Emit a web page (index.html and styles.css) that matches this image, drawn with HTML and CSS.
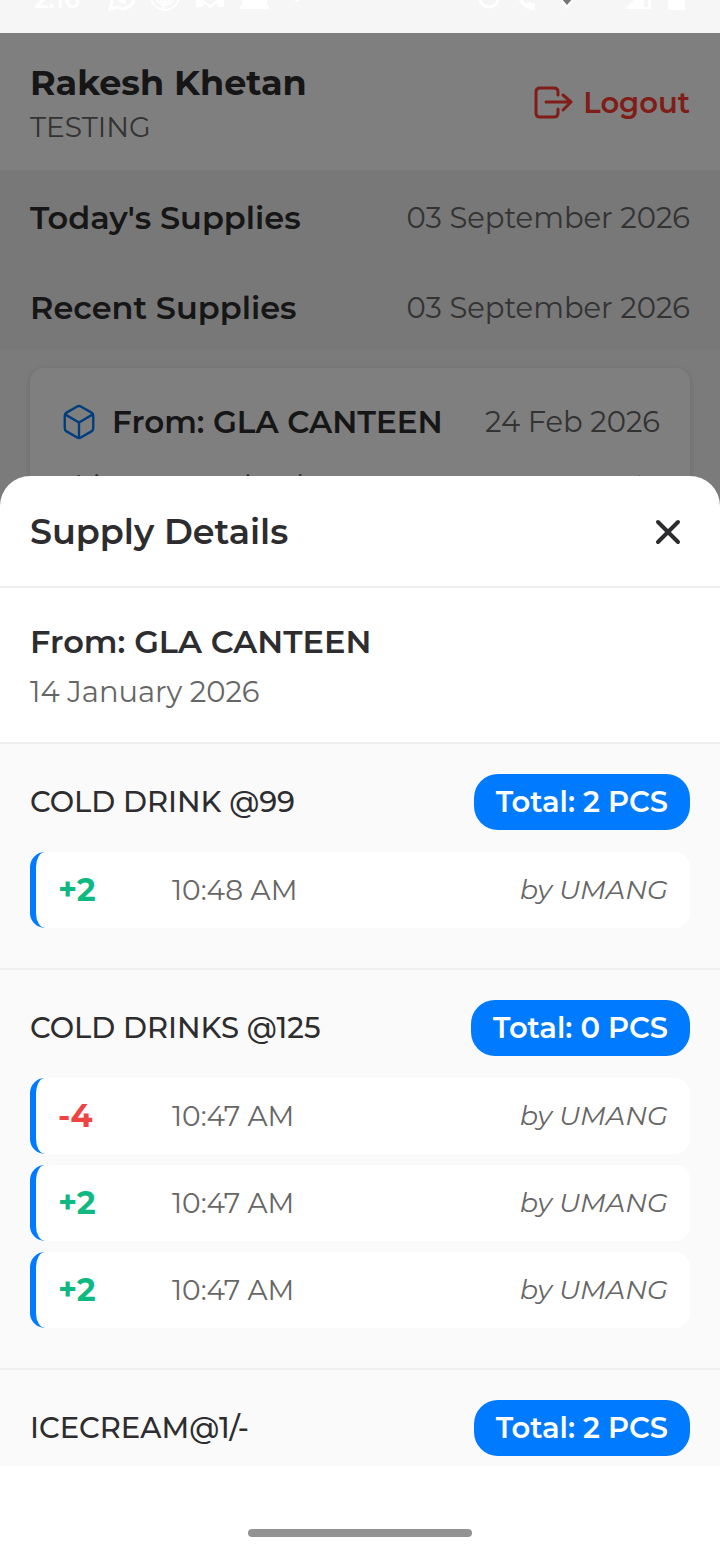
FILE: index.html
```html
<!doctype html>
<html lang="en">
  <head>
    <meta charset="UTF-8" />
    <meta name="viewport" content="width=device-width, initial-scale=1.0" />
    <title>Supply Details</title>
    <link rel="stylesheet" href="styles.css">
  </head>
  <body>
    <div class="status-bar">
      <div class="status-group">
        <span class="clock">2:16</span>
        <svg width="28" height="33" viewBox="0 0 28 33" fill="none" stroke="#fff" stroke-width="3">
          <path d="M3 9 L5 2 A12 12 0 1 1 10 7 Z" />
          <path d="M9 -3 Q12 4 19 4 L19 0 L14 -2" fill="#fff" stroke="none" />
        </svg>
        <svg width="30" height="33" viewBox="0 0 30 33" fill="none" stroke="#fff" stroke-width="2">
          <circle cx="15" cy="-4" r="14" />
          <circle cx="15" cy="-4" r="9" />
          <path d="M13 9 L16 -4 M10 0 Q15 6 20 0" />
        </svg>
        <svg width="30" height="33" viewBox="0 0 30 33" fill="#fff">
          <path d="M1 0 H8 V7 H1 Z M22 0 H29 V7 H22 Z M8 0 L15 5 L22 0 V3 L15 8 L8 3 Z" />
        </svg>
        <svg width="30" height="33" viewBox="0 0 30 33" fill="#fff">
          <path d="M1 0 H28 L26 4 L29 6 V9 H0 V6 L3 4 Z" />
        </svg>
        <svg width="26" height="33" viewBox="0 0 26 33" fill="#fff">
          <circle cx="12" cy="0" r="2" />
        </svg>
      </div>
      <div class="status-group">
        <svg width="22" height="33" viewBox="0 0 22 33" fill="none" stroke="#fff" stroke-width="3">
          <circle cx="11" cy="-2" r="9" />
        </svg>
        <svg width="24" height="33" viewBox="0 0 24 33" fill="#fff">
          <path d="M3 -2 Q7 10 20 10 V4 L14 2 L11 4 L8 0 Z" />
        </svg>
        <svg width="26" height="33" viewBox="0 0 26 33">
          <path d="M2 -4 L13 9 L24 -4 Z" fill="#fff" />
          <path d="M7 -2 L13 5 L19 -2 Z" fill="#777" />
        </svg>
        <svg class="signal" width="28" height="33" viewBox="0 0 28 33" fill="#fff">
          <path d="M0 9 L11 -2 H26 V9 Z" />
          <path d="M19 0 H23 V7 H19 Z" fill="#f6f6f6" />
        </svg>
        <svg width="18" height="33" viewBox="0 0 18 33" fill="#fff">
          <path d="M0 -4 H17 V10 H0 Z" />
        </svg>
      </div>
    </div>

    <div class="screen">
      <div class="app">
        <header class="header">
          <div>
            <h1>Rakesh Khetan</h1>
            <p class="role">TESTING</p>
          </div>
          <button type="button" class="btn-logout">
            <svg width="42" height="42" viewBox="0 0 42 42" fill="none" stroke="currentColor" stroke-width="3" stroke-linecap="round" stroke-linejoin="round">
              <path d="M25 13 V10 Q25 6 21 6 H7 Q3 6 3 10 V31 Q3 35 7 35 H21 Q25 35 25 31 V27" />
              <path d="M13 20 H38 M30 13 L38 20 L30 28" />
            </svg>
            Logout
          </button>
        </header>

        <section class="section-title">
          <h2>Today's Supplies</h2>
          <span class="muted">03 September 2026</span>
        </section>
        <section class="section-title">
          <h2>Recent Supplies</h2>
          <span class="muted">03 September 2026</span>
        </section>

        <div class="supply-card">
          <div class="supply-top">
            <svg width="38" height="38" viewBox="0 0 512 512" fill="none" stroke="#007aff" stroke-width="32" stroke-linecap="round" stroke-linejoin="round">
              <path d="M448 341V171a48 48 0 0 0-24-41L280 47a48 48 0 0 0-48 0L88 130a48 48 0 0 0-24 41v170a48 48 0 0 0 24 41l144 83a48 48 0 0 0 48 0l144-83a48 48 0 0 0 24-41z" />
              <path d="M69 153l187 110 187-110M256 463V263" />
            </svg>
            <h2>From: GLA CANTEEN</h2>
            <span class="muted">24 Feb 2026</span>
          </div>
          <div class="supply-bottom">
            <span class="muted">4 items received</span>
            <svg width="32" height="32" viewBox="0 0 512 512" fill="none" stroke="#666" stroke-width="48" stroke-linecap="round" stroke-linejoin="round">
              <path d="M184 112l144 144-144 144" />
            </svg>
          </div>
        </div>
      </div>

      <div class="backdrop"></div>

      <div class="sheet" role="dialog" aria-labelledby="sheet-title">
        <div class="sheet-header">
          <h2 id="sheet-title">Supply Details</h2>
          <button type="button" class="btn-close" aria-label="Close">
            <svg width="44" height="44" viewBox="0 0 44 44" fill="none" stroke="currentColor" stroke-width="4" stroke-linecap="round">
              <path d="M12 12 L32 32 M32 12 L12 32" />
            </svg>
          </button>
        </div>

        <div class="sheet-info">
          <h3>From: GLA CANTEEN</h3>
          <p class="muted">14 January 2026</p>
        </div>

        <div class="group">
          <div class="group-header">
            <h4>COLD DRINK @99</h4>
            <span class="badge">Total: 2 PCS</span>
          </div>
          <ul class="entries">
            <li class="entry">
              <span class="qty qty-plus">+2</span>
              <span class="time">10:48 AM</span>
              <span class="by">by UMANG</span>
            </li>
          </ul>
        </div>

        <div class="group">
          <div class="group-header">
            <h4>COLD DRINKS @125</h4>
            <span class="badge">Total: 0 PCS</span>
          </div>
          <ul class="entries">
            <li class="entry">
              <span class="qty qty-minus">-4</span>
              <span class="time">10:47 AM</span>
              <span class="by">by UMANG</span>
            </li>
            <li class="entry">
              <span class="qty qty-plus">+2</span>
              <span class="time">10:47 AM</span>
              <span class="by">by UMANG</span>
            </li>
            <li class="entry">
              <span class="qty qty-plus">+2</span>
              <span class="time">10:47 AM</span>
              <span class="by">by UMANG</span>
            </li>
          </ul>
        </div>

        <div class="group group-last">
          <div class="group-header">
            <h4>ICECREAM@1/-</h4>
            <span class="badge">Total: 2 PCS</span>
          </div>
        </div>

        <div class="nav-area">
          <div class="nav-handle"></div>
        </div>
      </div>
    </div>
  </body>
</html>
```

FILE: styles.css
```css
* {
  margin: 0;
  padding: 0;
  box-sizing: border-box;
}

body {
  font-family: Montserrat, Inter, sans-serif;
  font-size: 29px;
  line-height: 40px;
  color: #2d2d2f;
  background: #f6f6f6;
  min-height: 100vh;
  display: flex;
  flex-direction: column;
}

button {
  font: inherit;
  background: none;
  border: none;
  cursor: pointer;
}

svg {
  display: block;
  flex-shrink: 0;
}

.muted,
.role {
  color: #666;
}

/* status bar */
.status-bar {
  display: flex;
  justify-content: space-between;
  height: 33px;
  padding: 0 34px;
  overflow: hidden;
  background: #f6f6f6;
}

.status-group {
  display: flex;
  gap: 15px;
}

.clock {
  width: 58px;
  margin-top: -21px;
  font-size: 25px;
  font-weight: 600;
  color: #fff;
}

.signal {
  margin-left: 30px;
}

/* app */
.screen {
  position: relative;
  flex: 1;
  overflow: hidden;
}

.header {
  display: flex;
  justify-content: space-between;
  align-items: center;
  height: 137px;
  padding: 2px 30px 0;
  background: #fff;
}

.header h1 {
  font-size: 35px;
  line-height: 48px;
  font-weight: 700;
}

.role {
  font-size: 28px;
}

.btn-logout {
  display: flex;
  align-items: center;
  gap: 8px;
  font-weight: 600;
  color: #ff3b30;
}

.section-title {
  display: flex;
  justify-content: space-between;
  align-items: center;
  padding: 28px 30px 22px;
  background: #f0f0f0;
}

.section-title h2,
.sheet-info h3 {
  font-size: 32px;
  line-height: 40px;
  font-weight: 600;
}

.supply-card {
  margin: 18px 30px;
  padding: 34px 30px;
  background: #fff;
  border-radius: 14px;
  box-shadow: 0 1px 5px rgba(0, 0, 0, 0.15);
}

.supply-top {
  display: flex;
  align-items: center;
  gap: 14px;
}

.supply-top h2 {
  font-size: 31px;
  font-weight: 600;
}

.supply-top .muted {
  margin-left: auto;
}

.supply-bottom {
  display: flex;
  justify-content: space-between;
  align-items: center;
  margin-top: 24px;
  padding-left: 6px;
}

.backdrop {
  position: absolute;
  inset: 0;
  background: rgba(0, 0, 0, 0.5);
}

/* bottom sheet */
.sheet {
  position: absolute;
  left: 0;
  right: 0;
  bottom: 0;
  background: #fff;
  border-radius: 30px 30px 0 0;
}

.sheet-header {
  display: flex;
  justify-content: space-between;
  align-items: center;
  padding: 32px 30px 30px;
  border-bottom: 2px solid #eee;
}

.sheet-header h2 {
  font-size: 35px;
  line-height: 48px;
  font-weight: 600;
}

.btn-close {
  color: #2d2d2f;
}

.sheet-info {
  display: flex;
  flex-direction: column;
  gap: 10px;
  padding: 34px 30px 30px;
  border-bottom: 2px solid #eee;
}

.group {
  padding: 30px 30px 40px;
  background: #fafafa;
  border-bottom: 2px solid #f0f0f0;
}

.group-last {
  padding-bottom: 10px;
  border-bottom: none;
}

.group-header {
  display: flex;
  justify-content: space-between;
  align-items: center;
}

.group-header h4 {
  font-size: 29px;
  font-weight: 500;
}

.badge {
  padding: 8px 22px;
  border-radius: 24px;
  background: #007aff;
  color: #fff;
  font-weight: 600;
}

.entries {
  display: flex;
  flex-direction: column;
  gap: 11px;
  margin-top: 22px;
  list-style: none;
}

.entry {
  display: flex;
  align-items: center;
  padding: 18px 22px;
  border-left: 6px solid #007aff;
  border-radius: 15px;
  background: #fff;
  font-size: 28px;
  color: #666;
}

.qty {
  width: 114px;
  font-size: 32px;
  font-weight: 700;
}

.qty-plus {
  color: #10b981;
}

.qty-minus {
  color: #ef4444;
}

.by {
  margin-left: auto;
  font-size: 27px;
  font-style: italic;
}

.nav-area {
  display: flex;
  justify-content: center;
  padding: 63px 0 18px;
}

.nav-handle {
  width: 31%;
  height: 8px;
  border-radius: 4px;
  background: #939393;
}
```
